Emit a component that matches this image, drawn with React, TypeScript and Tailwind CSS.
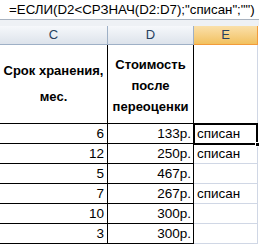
const rows: { c: string; d: string; e: string }[] = [
  { c: "6", d: "133р.", e: "списан" },
  { c: "12", d: "250р.", e: "списан" },
  { c: "5", d: "467р.", e: "" },
  { c: "7", d: "267р.", e: "списан" },
  { c: "10", d: "300р.", e: "" },
  { c: "3", d: "300р.", e: "" },
];

export default function App() {
  return (
    <div
      className="relative w-[259px] h-[245px] overflow-hidden bg-white text-black"
      style={{ fontFamily: '"Liberation Sans", Arial, sans-serif' }}
    >
      {/* formula bar */}
      <div className="h-[20px] border-b border-[#a9b3c0] pl-[9px] text-[13.3px] leading-[19px] whitespace-nowrap">
        =ЕСЛИ(D2&lt;СРЗНАЧ(D2:D7);"списан";"")
      </div>
      <div className="h-[6px] bg-[#eef1f5]" />

      {/* column headers */}
      <div className="flex h-[19px] text-[13px] leading-[18px] text-[#27415f]">
        <div className="w-[108px] shrink-0 text-center bg-gradient-to-b from-[#f6f8fb] to-[#dde3eb] border-b border-r border-[#9eb0c6]">
          C
        </div>
        <div className="w-[86px] shrink-0 text-center bg-gradient-to-b from-[#f6f8fb] to-[#dde3eb] border-b border-r border-[#9eb0c6]">
          D
        </div>
        <div className="w-[64px] shrink-0 text-center bg-gradient-to-b from-[#fae0aa] to-[#f2c15e] border-b border-r border-[#f29b3b]">
          E
        </div>
      </div>

      {/* table header */}
      <div className="flex h-[79px] text-[13px] font-bold">
        <div className="w-[108px] shrink-0 border-b border-r border-black flex flex-col items-center pt-[13px] leading-[26px]">
          <span>Срок хранения,</span>
          <span>мес.</span>
        </div>
        <div className="w-[86px] shrink-0 border-b border-r border-black flex flex-col items-center pt-[9px] leading-[21px]">
          <span>Стоимость</span>
          <span>после</span>
          <span>переоценки</span>
        </div>
        <div className="w-[64px] shrink-0 border-b border-r border-[#d0d7e5]" />
      </div>

      {rows.map((r, i) => (
        <div key={i} className="flex h-[20px] text-[13.5px] leading-[19px]">
          <div className="w-[108px] shrink-0 border-b border-r border-black text-right pr-[3px]">
            {r.c}
          </div>
          <div className="w-[86px] shrink-0 border-b border-r border-black text-right pr-[2px]">
            {r.d}
          </div>
          <div className="w-[64px] shrink-0 border-b border-r border-[#d0d7e5] pl-[3px]">
            {r.e}
          </div>
        </div>
      ))}

      {/* selected cell E2 */}
      <div className="absolute left-[193px] top-[123px] w-[65px] h-[22px] border-2 border-black" />
      <div className="absolute left-[255px] top-[142px] w-[5px] h-[5px] bg-black border border-white" />
    </div>
  );
}
